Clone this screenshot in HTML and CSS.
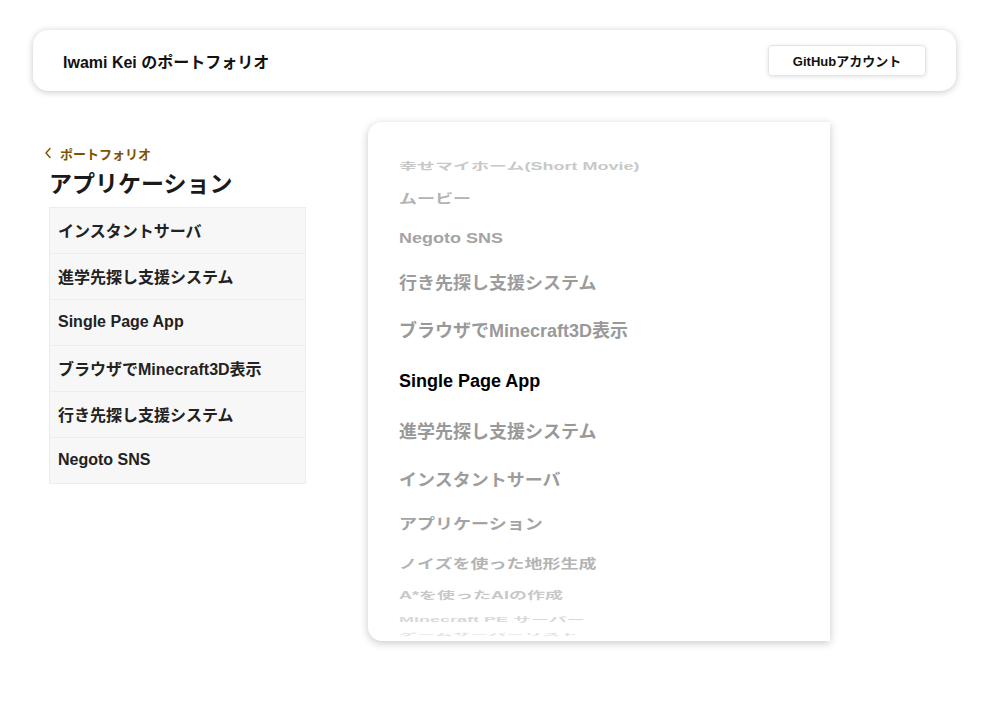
FILE: index.html
```html
<!DOCTYPE html>
<html lang="ja">
<head>
<meta charset="utf-8">
<title>Iwami Kei のポートフォリオ</title>
<link rel="stylesheet" href="styles.css">
</head>
<body>
<header class="topbar">
  <div class="site-title">Iwami Kei のポートフォリオ</div>
  <a class="gh-btn">GitHubアカウント</a>
</header>
<main class="main">
  <section class="side">
    <a class="back">
      <svg class="chev" width="8" height="12" viewBox="0 0 8 12"><path d="M6 1.5 L2 6 L6 10.5" fill="none" stroke="#7d5200" stroke-width="1.4" stroke-linecap="round" stroke-linejoin="round"/></svg>
      <span>ポートフォリオ</span>
    </a>
    <h1 class="heading">アプリケーション</h1>
    <ul class="list">
      <li class="list-item">インスタントサーバ</li>
      <li class="list-item">進学先探し支援システム</li>
      <li class="list-item">Single Page App</li>
      <li class="list-item">ブラウザでMinecraft3D表示</li>
      <li class="list-item">行き先探し支援システム</li>
      <li class="list-item">Negoto SNS</li>
    </ul>
  </section>
  <section class="picker">
    <div class="wheel">
      <div class="w-item d5" style="height:28.3px"><span style="transform:scaleY(.559)">幸せマイホーム(Short Movie)</span></div>
      <div class="w-item d4" style="height:36.0px"><span style="transform:scaleY(.710)">ムービー</span></div>
      <div class="w-item d3" style="height:42.2px"><span style="transform:scaleY(.833)">Negoto SNS</span></div>
      <div class="w-item d2" style="height:46.9px"><span style="transform:scaleY(.925)">行き先探し支援システム</span></div>
      <div class="w-item d1" style="height:49.7px"><span style="transform:scaleY(.981)">ブラウザでMinecraft3D表示</span></div>
      <div class="w-item d0" style="height:50.7px"><span>Single Page App</span></div>
      <div class="w-item d1" style="height:49.7px"><span style="transform:scaleY(.981)">進学先探し支援システム</span></div>
      <div class="w-item d2" style="height:46.9px"><span style="transform:scaleY(.925)">インスタントサーバ</span></div>
      <div class="w-item d3" style="height:42.2px"><span style="transform:scaleY(.833)">アプリケーション</span></div>
      <div class="w-item d4" style="height:36.0px"><span style="transform:scaleY(.710)">ノイズを使った地形生成</span></div>
      <div class="w-item d5" style="height:28.3px"><span style="transform:scaleY(.559)">A*を使ったAIの作成</span></div>
      <div class="w-item d6" style="height:19.7px"><span style="transform:scaleY(.388)">Minecraft PE サーバー</span></div>
      <div class="w-item d7" style="height:10.2px"><span style="transform:scaleY(.201)">ゲームサーバーリスト</span></div>
    </div>
  </section>
</main>
</body>
</html>
```
FILE: styles.css
```css
* { box-sizing: border-box; }
html, body { margin: 0; padding: 0; background: #fff; }
body {
  font-family: "Liberation Sans", "Noto Sans CJK JP", sans-serif;
  color: #1a1a1a;
  width: 1000px;
  height: 715px;
  overflow: hidden;
}
.topbar {
  margin: 30px 44px 0 33px;
  height: 61px;
  background: #fff;
  border-radius: 15px;
  box-shadow: 0 1px 7px rgba(0,0,0,.22);
  display: flex;
  align-items: center;
  justify-content: space-between;
  padding: 0 30px;
}
.site-title {
  font-size: 16px;
  font-weight: 700;
  color: #111;
}
.gh-btn {
  display: flex;
  align-items: center;
  justify-content: center;
  width: 158px;
  height: 31px;
  border: 1px solid #e4e4e4;
  border-radius: 4px;
  box-shadow: 0 1px 4px rgba(0,0,0,.12);
  font-size: 13px;
  font-weight: 700;
  color: #111;
}
.main {
  display: flex;
  margin-top: 31px;
  padding-left: 44px;
}
.side {
  width: 262px;
  padding-top: 22px;
}
.back {
  display: flex;
  align-items: center;
  height: 18px;
  font-size: 13px;
  font-weight: 700;
  color: #7d5200;
}
.chev { margin-right: 8px; }
.heading {
  margin: 7px 0 8px 5px;
  font-size: 23px;
  line-height: 30px;
  font-weight: 700;
  color: #1a1a1a;
}
.list {
  list-style: none;
  margin: 0 0 0 5px;
  padding: 0;
  width: 257px;
  border: 1px solid #ededed;
  border-bottom: none;
}
.list-item {
  height: 46px;
  display: flex;
  align-items: center;
  padding: 0 0 2px 8px;
  background: #f7f7f7;
  border-bottom: 1px solid #ededed;
  font-size: 16px;
  font-weight: 700;
  color: #222;
}
.picker {
  margin-left: 62px;
  width: 462px;
  height: 519px;
  background: #fff;
  border-radius: 14px 0 0 14px;
  box-shadow: 0 2px 9px rgba(0,0,0,.22);
  overflow: hidden;
}
.wheel {
  padding: 31px 0 0 31px;
  display: flex;
  flex-direction: column;
}
.w-item {
  display: flex;
  align-items: center;
  font-size: 18px;
  font-weight: 700;
  white-space: nowrap;
}
.w-item span {
  display: inline-block;
  line-height: 22px;
  transform-origin: left center;
}
.d0 { color: #000; }
.d1 { color: #999; }
.d2 { color: #9c9c9c; }
.d3 { color: #a4a4a4; }
.d4 { color: #b4b4b4; }
.d5 { color: #c8c8c8; }
.d6 { color: #d8d8d8; }
.d7 { color: #e2e2e2; }
```
